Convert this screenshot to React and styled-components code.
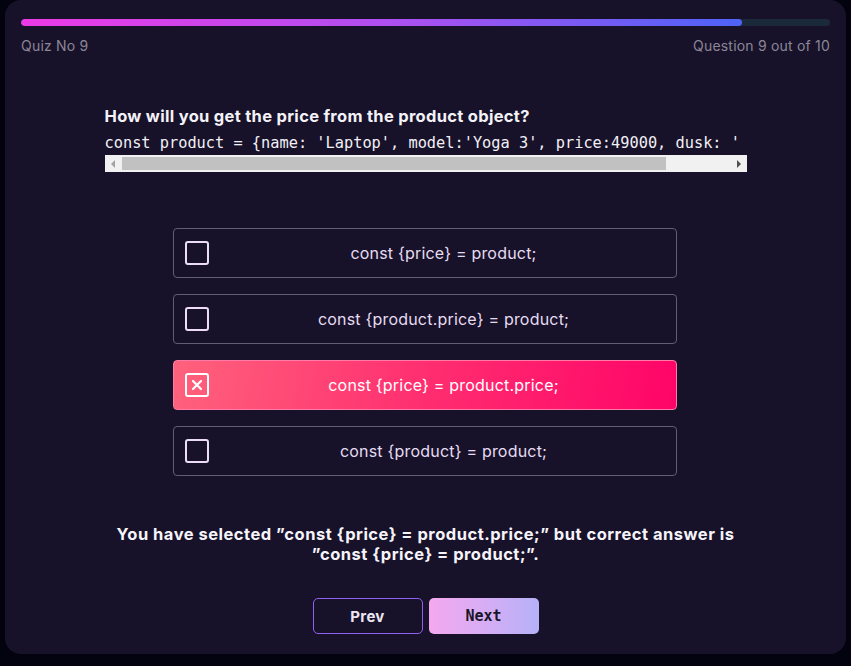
import styled, { createGlobalStyle } from "styled-components";

const GlobalStyle = createGlobalStyle`
  html, body {
    margin: 0;
    padding: 0;
    background: #03030f;
  }
  * {
    box-sizing: border-box;
  }
`;

const options = [
  "const {price} = product;",
  "const {product.price} = product;",
  "const {price} = product.price;",
  "const {product} = product;",
];

const selected = 2;
const progress = 89.1;

const CheckIcon = ({ checked }) => (
  <Check $checked={checked}>
    {checked && (
      <svg width="12" height="12" viewBox="0 0 12 12">
        <path d="M2 2 L10 10 M10 2 L2 10" stroke="#fff" strokeWidth="2.2" strokeLinecap="round" />
      </svg>
    )}
  </Check>
);

const App = () => {
  return (
    <>
      <GlobalStyle />
      <Card>
        <Track>
          <Fill style={{ width: `${progress}%` }} />
        </Track>
        <Meta>
          <span>Quiz No 9</span>
          <span>Question 9 out of 10</span>
        </Meta>

        <QuestionBox>
          <Question>How will you get the price from the product object?</Question>
          <CodeWrap>
            <Code>const product = {"{"}name: 'Laptop', model:'Yoga 3', price:49000, dusk: '</Code>
          </CodeWrap>
          <ScrollBar>
            <Arrow $dir="left" />
            <Thumb />
            <Arrow $dir="right" />
          </ScrollBar>
        </QuestionBox>

        <OptionList>
          {options.map((opt, idx) => (
            <Option key={idx} $active={idx === selected}>
              <CheckIcon checked={idx === selected} />
              <OptionText>{opt}</OptionText>
            </Option>
          ))}
        </OptionList>

        <Feedback>
          You have selected ”const {"{"}price{"}"} = product.price;” but correct answer is
          <br />
          ”const {"{"}price{"}"} = product;”.
        </Feedback>

        <Buttons>
          <PrevBtn>Prev</PrevBtn>
          <NextBtn>Next</NextBtn>
        </Buttons>
      </Card>
    </>
  );
};

export default App;

const Card = styled.div`
  margin: 0 5px;
  height: 654px;
  background: #171229;
  border-radius: 16px;
  padding: 19px 16px 0;
  font-family: Inter, "Noto Sans", sans-serif;
`;

const Track = styled.div`
  height: 7px;
  border-radius: 4px;
  background: #1b2a3a;
  overflow: hidden;
`;

const Fill = styled.div`
  height: 100%;
  border-radius: 4px;
  background: linear-gradient(90deg, #ec3ae6 0%, #b14ff0 50%, #4d63f7 100%);
`;

const Meta = styled.div`
  display: flex;
  justify-content: space-between;
  margin-top: 11px;
  font-size: 14px;
  color: #8b8698;
  letter-spacing: 0.2px;
`;

const QuestionBox = styled.div`
  width: 642px;
  margin: 52px auto 0;
`;

const Question = styled.div`
  font-size: 16.5px;
  font-weight: 700;
  color: #f4f2f8;
  letter-spacing: 0.3px;
`;

const CodeWrap = styled.div`
  overflow: hidden;
  margin-top: 8px;
`;

const Code = styled.pre`
  margin: 0;
  font-family: "DejaVu Sans Mono", "Liberation Mono", monospace;
  font-size: 15.3px;
  line-height: 19px;
  color: #f2f0f6;
  white-space: pre;
`;

const ScrollBar = styled.div`
  display: flex;
  align-items: center;
  height: 17px;
  margin-top: 2px;
  background: #f1f1f1;
  padding: 0 6px;
  gap: 4px;
`;

const Arrow = styled.div`
  width: 0;
  height: 0;
  border-top: 4px solid transparent;
  border-bottom: 4px solid transparent;
  ${(p) =>
    p.$dir === "left"
      ? "border-right: 4px solid #a3a3a3; margin-right: 3px;"
      : "border-left: 4px solid #505050; margin-left: auto;"}
`;

const Thumb = styled.div`
  width: 544px;
  height: 13px;
  background: #c1c1c1;
`;

const OptionList = styled.div`
  width: 504px;
  margin: 56px auto 0;
  display: flex;
  flex-direction: column;
  gap: 16px;
  transform: translateX(-1px);
`;

const Option = styled.div`
  display: flex;
  align-items: center;
  height: 50px;
  padding: 0 11px;
  border-radius: 4px;
  border: 1px solid ${(p) => (p.$active ? "#ff7aa6" : "#625d77")};
  background: ${(p) =>
    p.$active ? "linear-gradient(100deg, #ff627c 0%, #ff2e70 50%, #ff0468 100%)" : "transparent"};
  color: ${(p) => (p.$active ? "#ffffff" : "#e6dcf2")};
`;

const Check = styled.div`
  width: 24px;
  height: 24px;
  flex-shrink: 0;
  border-radius: 3px;
  border: 2px solid ${(p) => (p.$checked ? "#ffffff" : "#ecdcf8")};
  display: flex;
  align-items: center;
  justify-content: center;
`;

const OptionText = styled.div`
  flex: 1;
  text-align: center;
  font-size: 16px;
  letter-spacing: 0.2px;
  padding-left: 14px;
`;

const Feedback = styled.div`
  margin-top: 48px;
  text-align: center;
  font-size: 16.5px;
  font-weight: 700;
  line-height: 20px;
  color: #f6f4fa;
  letter-spacing: 0.5px;
`;

const Buttons = styled.div`
  display: flex;
  justify-content: center;
  gap: 6px;
  margin-top: 34px;
`;

const PrevBtn = styled.button`
  width: 110px;
  height: 36px;
  border-radius: 5px;
  border: 1px solid #9060f2;
  background: transparent;
  color: #ece6f4;
  font-family: Inter, "Noto Sans", sans-serif;
  font-weight: 700;
  font-size: 15px;
  letter-spacing: 0.3px;
`;

const NextBtn = styled.button`
  width: 110px;
  height: 36px;
  border-radius: 5px;
  border: none;
  background: linear-gradient(90deg, #f4a8ef 0%, #d7adf5 50%, #b5b1f8 100%);
  color: #1a1526;
  font-family: "DejaVu Sans Mono", "Liberation Mono", monospace;
  font-weight: 700;
  font-size: 15px;
`;
